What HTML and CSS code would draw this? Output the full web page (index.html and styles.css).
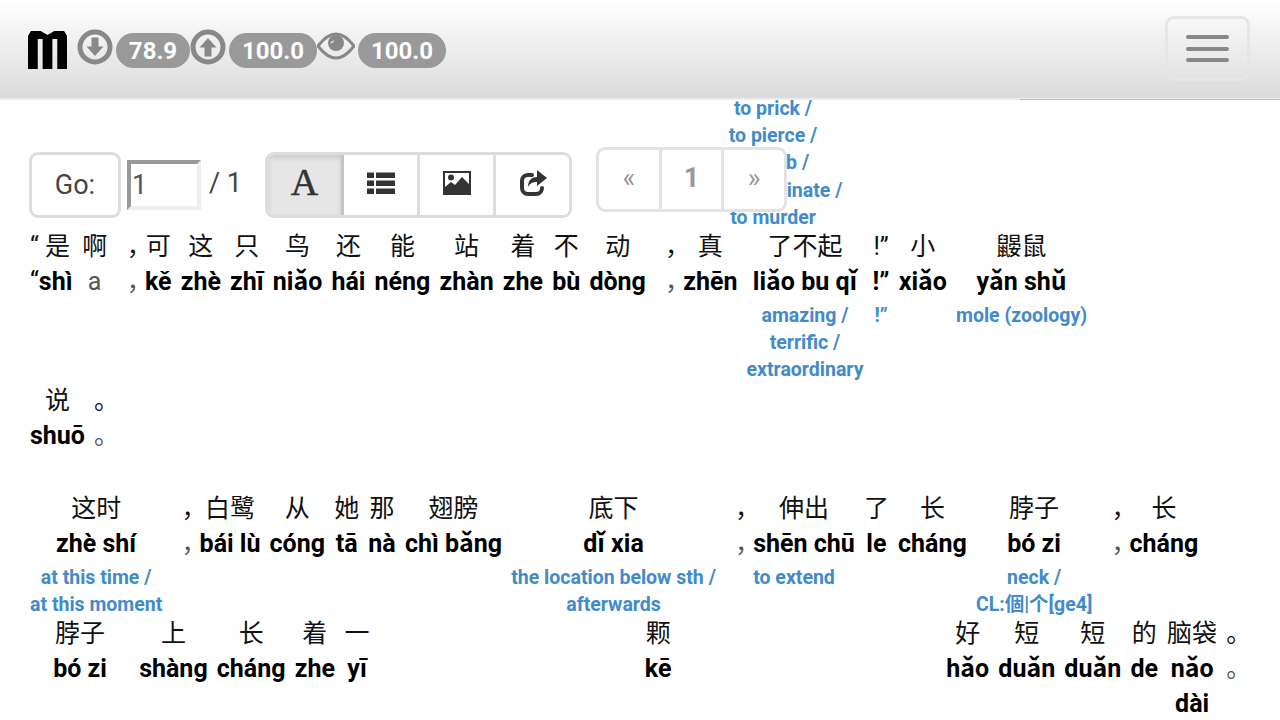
FILE: index.html
```html
<!DOCTYPE html>
<html lang="zh">
<head>
<meta charset="utf-8">
<title>Reader</title>
<link rel="stylesheet" href="styles.css">
</head>
<body>
<header class="topbar">
  <svg class="logo" viewBox="0 0 40 40" preserveAspectRatio="none" aria-label="logo"><path d="M0 39V6L3 1H13L20 5L27 1H37L40 6V39H30V9H25V39H15V9H10V39Z"/></svg>
  <svg class="ico ico-down" viewBox="0 0 36 36"><circle cx="18" cy="18" r="15" class="ring"/><path d="M14.500 8.500h7v9h5L18 27 9.500 17.500h5z" class="fill"/></svg>
  <span class="badge b1">78.9</span>
  <svg class="ico ico-up" viewBox="0 0 36 36"><circle cx="18" cy="18" r="15" class="ring"/><path d="M14.500 27.500h7v-9h5L18 9 9.500 18.500h5z" class="fill"/></svg>
  <span class="badge b2">100.0</span>
  <svg class="ico-eye" viewBox="0 0 38 28"><path d="M1 14C7 6 13 2 19 2s12 4 18 12c-6 8-12 12-18 12S7 22 1 14z" class="eye-line"/><circle cx="19" cy="11" r="8" class="fill"/><path d="M13 11a3 3 0 0 0 4-3l-4 3z" class="eye-glint"/></svg>
  <span class="badge b3">100.0</span>
  <button class="burger" aria-label="menu"><i></i><i></i><i></i></button>
</header>
<div class="rule"></div>

<main class="page">
  <div class="float-gloss">
    <div>to prick /</div><div>to pierce /</div><div>to stab /</div><div>to assassinate /</div><div>to murder</div>
  </div>

  <div class="toolbar">
    <div class="go">Go:</div>
    <input class="page-input" value="1" aria-label="page">
    <span class="total">/ 1</span>
    <div class="group">
      <button class="seg active"><span class="a-icon">A</span></button>
      <button class="seg"><svg class="tool" viewBox="0 0 28 24"><path d="M0 1.500h7v5.500H0zM9 1.500h19v5.500H9zM0 9.500h7v5.500H0zM9 9.500h19v5.500H9zM0 17.500h7V23H0zM9 17.500h19V23H9z"/></svg></button>
      <button class="seg"><svg class="tool" viewBox="0 0 28 24"><path fill-rule="evenodd" d="M0 0h28v24H0zM2 2v14l6-5 4 3 7-8 7 7V2zM8 3.500a3 3 0 1 1 0 6 3 3 0 0 1 0-6z"/></svg></button>
      <button class="seg"><svg class="tool" viewBox="0 0 28 26"><path d="M18 0l10 8-10 8v-4c-4 0-7 1-9 5 0-7 4-10 9-10z"/><path class="share-c" d="M13 5H9a6 6 0 0 0-6 6v7a6 6 0 0 0 6 6h8a6 6 0 0 0 6-6"/></svg></button>
    </div>
    <nav class="pager">
      <span class="pg">«</span>
      <span class="pg num">1</span>
      <span class="pg">»</span>
    </nav>
  </div>

  <div class="row r1">
    <div class="w first"><div class="h">“&nbsp;是</div><div class="y"><span class="q">“</span>shì</div></div>
    <div class="w wa"><div class="h">啊</div><div class="y thin">a</div></div>
    <div class="w pc"><div class="h">，</div><div class="y thin">，</div></div>
    <div class="w"><div class="h">可</div><div class="y">kě</div></div>
    <div class="w"><div class="h">这</div><div class="y">zhè</div></div>
    <div class="w"><div class="h">只</div><div class="y">zhī</div></div>
    <div class="w"><div class="h">鸟</div><div class="y">niǎo</div></div>
    <div class="w"><div class="h">还</div><div class="y">hái</div></div>
    <div class="w"><div class="h">能</div><div class="y">néng</div></div>
    <div class="w"><div class="h">站</div><div class="y">zhàn</div></div>
    <div class="w"><div class="h">着</div><div class="y">zhe</div></div>
    <div class="w"><div class="h">不</div><div class="y">bù</div></div>
    <div class="w"><div class="h">动</div><div class="y">dòng</div></div>
    <div class="w pc"><div class="h">，</div><div class="y thin">，</div></div>
    <div class="w"><div class="h">真</div><div class="y">zhēn</div></div>
    <div class="w"><div class="h">了不起</div><div class="y">liǎo bu qǐ</div><div class="g">amazing /</div><div class="g">terrific /</div><div class="g">extraordinary</div></div>
    <div class="w"><div class="h">!”</div><div class="y">!”</div><div class="g">!”</div></div>
    <div class="w"><div class="h">小</div><div class="y">xiǎo</div></div>
    <div class="w"><div class="h">鼹鼠</div><div class="y">yǎn shǔ</div><div class="g">mole (zoology)</div></div>
  </div>

  <div class="row r2">
    <div class="w"><div class="h">说</div><div class="y">shuō</div></div>
    <div class="w ps"><div class="h">。</div><div class="y thin">。</div></div>
  </div>

  <div class="row r3">
    <div class="w"><div class="h">这时</div><div class="y">zhè shí</div><div class="g">at this time /</div><div class="g">at this moment</div></div>
    <div class="w pc"><div class="h">，</div><div class="y thin">，</div></div>
    <div class="w"><div class="h">白鹭</div><div class="y">bái lù</div></div>
    <div class="w"><div class="h">从</div><div class="y">cóng</div></div>
    <div class="w"><div class="h">她</div><div class="y">tā</div></div>
    <div class="w"><div class="h">那</div><div class="y">nà</div></div>
    <div class="w"><div class="h">翅膀</div><div class="y">chì bǎng</div></div>
    <div class="w"><div class="h">底下</div><div class="y">dǐ xia</div><div class="g">the location below sth /</div><div class="g">afterwards</div></div>
    <div class="w pc"><div class="h">，</div><div class="y thin">，</div></div>
    <div class="w"><div class="h">伸出</div><div class="y">shēn chū</div><div class="g left">to extend</div></div>
    <div class="w"><div class="h">了</div><div class="y">le</div></div>
    <div class="w"><div class="h">长</div><div class="y">cháng</div></div>
    <div class="w"><div class="h">脖子</div><div class="y">bó zi</div><div class="g">neck /</div><div class="g">CL:個|个[ge4]</div></div>
    <div class="w pc"><div class="h">，</div><div class="y thin">，</div></div>
    <div class="w"><div class="h">长</div><div class="y">cháng</div></div>
  </div>

  <div class="row r4">
    <div class="w wide-bo"><div class="h">脖子</div><div class="y">bó zi</div></div>
    <div class="w"><div class="h">上</div><div class="y">shàng</div></div>
    <div class="w"><div class="h">长</div><div class="y">cháng</div></div>
    <div class="w"><div class="h">着</div><div class="y">zhe</div></div>
    <div class="w wa"><div class="h">一</div><div class="y">yī</div></div>
    <div class="w wide-ke"><div class="h">颗</div><div class="y">kē</div></div>
    <div class="w"><div class="h">好</div><div class="y">hǎo</div></div>
    <div class="w"><div class="h">短</div><div class="y">duǎn</div></div>
    <div class="w"><div class="h">短</div><div class="y">duǎn</div></div>
    <div class="w"><div class="h">的</div><div class="y">de</div></div>
    <div class="w"><div class="h">脑袋</div><div class="y">nǎo</div><div class="y">dài</div></div>
    <div class="w ps"><div class="h">。</div><div class="y thin">。</div></div>
  </div>
</main>
</body>
</html>
```
FILE: styles.css
```css
* { box-sizing: border-box; }
html, body { margin: 0; padding: 0; height: 720px; overflow: hidden; background: #fff; }
body { font-family: Roboto, "Noto Sans CJK SC", sans-serif; color: #000; }

.topbar {
  position: relative;
  z-index: 3;
  height: 98px;
  display: flex;
  align-items: flex-start;
  padding: 30px 30px 0 28px;
  background: linear-gradient(to bottom, #ffffff 0%, #dcdbdb 100%);
}
.rule {
  height: 2px;
  background: #ececec;
  position: relative;
}
.rule::after {
  content: "";
  position: absolute;
  left: 1020px; right: 0; top: 1px;
  height: 1px;
  background: #bdbdbd;
}
.logo { width: 39px; height: 40px; fill: #000; margin-right: 10px; flex: none; }
.ico { width: 36px; height: 36px; flex: none; margin-top: -1px; margin-right: 3px; }
.ring { fill: none; stroke: #888; stroke-width: 5px; }
.fill { fill: #888; }
.ico-eye { width: 38px; height: 28px; flex: none; margin-top: 2px; margin-right: 3px; }
.eye-line { fill: none; stroke: #888; stroke-width: 3px; }
.eye-glint { fill: #eee; }
.badge {
  height: 35px;
  margin-top: 3px;
  border-radius: 18px;
  background: #999;
  color: #fff;
  font-weight: 700;
  font-size: 24px;
  line-height: 37px;
  padding: 0;
  text-align: center;
  flex: none;
}
.b1 { width: 74px; }
.b2 { width: 88px; }
.b3 { width: 88px; }
.burger {
  margin-left: auto;
  margin-top: -14px;
  width: 85px;
  height: 65px;
  border: 3px solid #e6e6e6;
  border-radius: 9px;
  background: transparent;
  padding: 0;
  display: flex;
  flex-direction: column;
  align-items: center;
  justify-content: center;
  gap: 7.500px;
}
.burger i { display: block; width: 43px; height: 4px; border-radius: 2px; background: #888; }

.page { position: relative; padding: 0 0 0 30px; }

.float-gloss {
  position: absolute;
  z-index: 0;
  left: 673px;
  top: -5px;
  width: 200px;
  text-align: center;
  color: #428bca;
  font-weight: 700;
  font-size: 19.500px;
  line-height: 27.200px;
}

.toolbar {
  position: relative;
  z-index: 1;
  height: 129px;
  display: flex;
  align-items: flex-start;
}
.go {
  margin-top: 52px;
  margin-left: -1px;
  width: 92px;
  height: 66px;
  border: 3px solid #ddd;
  border-radius: 9px;
  background: #fff;
  color: #444;
  font-size: 27px;
  line-height: 60px;
  text-align: center;
}
.page-input {
  margin-top: 60px;
  margin-left: 6px;
  width: 74px;
  height: 50px;
  border-style: solid;
  border-width: 4px;
  border-color: #999 #eee #eee #999;
  background: #fff;
  color: #555;
  font: 27px Roboto, sans-serif;
  padding: 0 0 0 1px;
  outline: none;
}
.total {
  margin-top: 67px;
  margin-left: 8px;
  width: 56px;
  font-size: 27px;
  line-height: 32px;
  color: #444;
}
.group {
  margin-top: 52px;
  display: flex;
  height: 66px;
  border: 3px solid #ddd;
  border-radius: 9px;
  background: #fff;
  overflow: hidden;
}
.seg {
  width: 76px;
  height: 100%;
  padding: 0;
  border: 0;
  border-right: 3px solid #ddd;
  background: #fff;
  display: flex;
  align-items: center;
  justify-content: center;
  color: #333;
}
.seg:last-child { border-right: 0; width: 73px; }
.seg.active { background: #e6e6e6; box-shadow: inset 0 3px 5px rgba(0,0,0,.125); border-right-color: #c4c4c4; }
.a-icon { font-family: "Liberation Serif", serif; font-size: 38px; line-height: 40px; color: #333; margin-top: -6px; -webkit-text-stroke: 0.500px #333; }
.tool { width: 28px; height: 26px; fill: #333; margin-top: -4px; }
.share-c { fill: none; stroke: #333; stroke-width: 4px; stroke-linecap: round; }
.pager {
  margin-top: 47px;
  margin-left: 24px;
  width: 191px;
  height: 65px;
  display: flex;
  border: 3px solid #e3e3e3;
  border-radius: 9px;
  background: #fff;
  color: #999;
}
.pg {
  flex: 1;
  text-align: center;
  font-size: 27px;
  line-height: 56px;
  border-right: 3px solid #e3e3e3;
}
.pg:last-child { border-right: 0; }
.pg.num { font-weight: 700; }

.row {
  position: relative;
  z-index: 2;
  display: flex;
  align-items: flex-start;
  gap: 9.150px;
}
.w { flex: none; text-align: center; white-space: nowrap; }
.first .h { text-align: left; }
.h {
  font-size: 25px;
  line-height: 35px;
  height: 34.500px;
  color: #111;
}
.y {
  font-weight: 700;
  font-size: 25px;
  line-height: 35px;
  height: 35px;
}
.y + .g { margin-top: 3px; }
.q { font-weight: 400; }
.y.thin { font-weight: 400; color: #555; }
.g {
  color: #428bca;
  font-weight: 700;
  font-size: 19.500px;
  line-height: 27.200px;
}
.g.left { text-align: left; }
.pc { width: 19px; text-align: left; text-indent: 10px; }
.ps { width: 20px; text-align: left; }
.wa { min-width: 26px; }
.r1 { height: 154px; }
.r2 { height: 108px; }
.r3 { height: 125px; }
.wide-bo { width: 100px; }
.wide-ke { width: 558px; }
```
